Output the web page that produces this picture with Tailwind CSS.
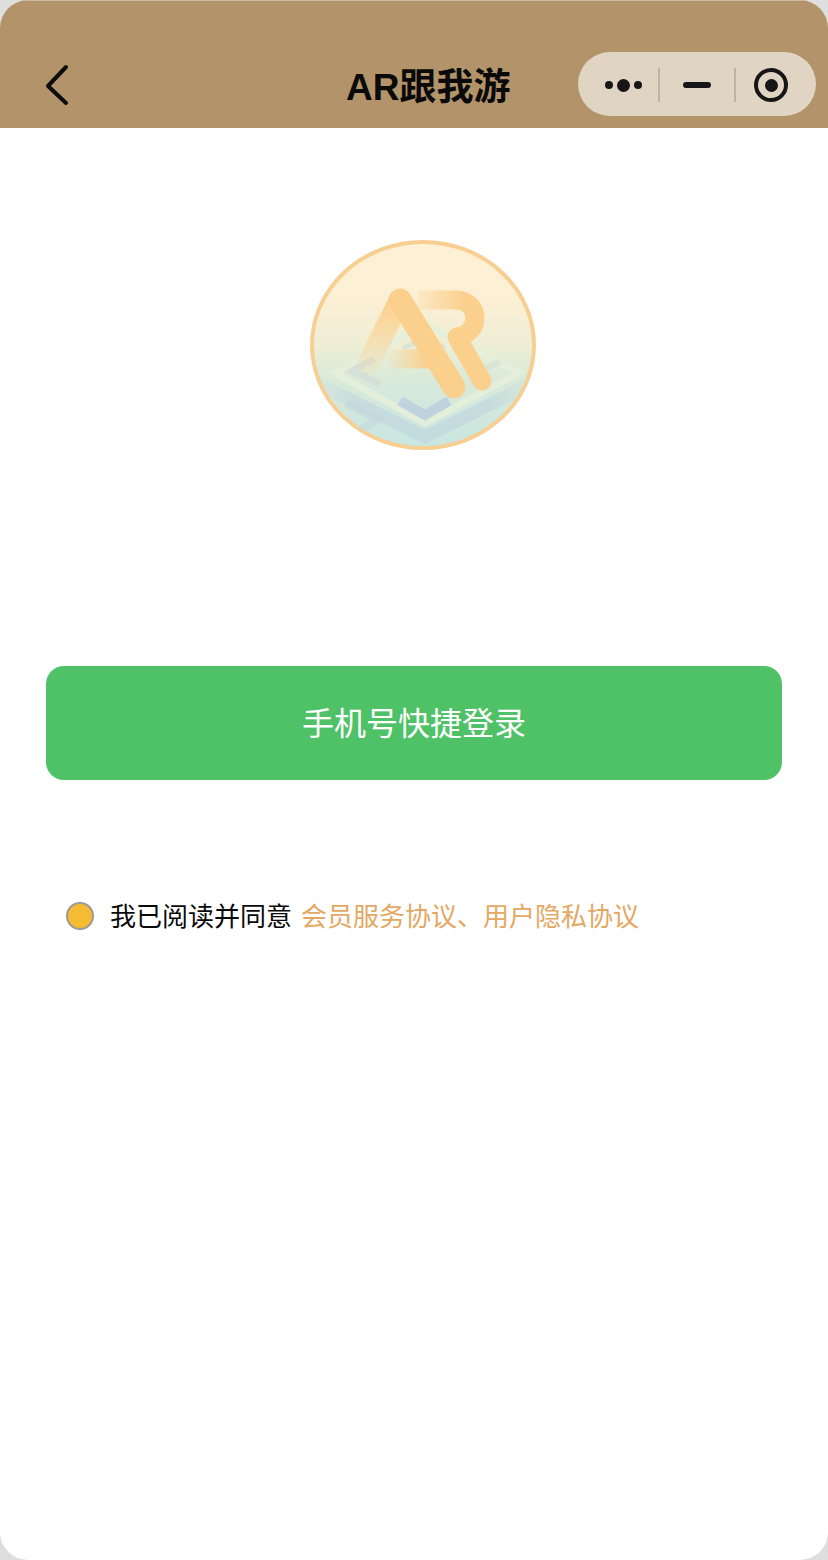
<!DOCTYPE html>
<html lang="zh">
<head>
<meta charset="utf-8">
<script src="https://cdn.jsdelivr.net/npm/@tailwindcss/browser@4"></script>
<title>AR跟我游</title>
</head>
<body class="m-0 bg-[#dedede]">
<div class="w-[828px] h-[1560px] overflow-hidden rounded-[28px] bg-white flex flex-col font-['Liberation_Sans','Noto_Sans_CJK_SC',sans-serif]">
  <header class="h-[128px] shrink-0 bg-[#b39369] flex items-start pt-[51px] border-t border-[#cdbba2]">
    <svg class="ml-[44px] mt-[12px] w-[26px] h-[42px]" viewBox="0 0 26 42" fill="none" stroke="#0c0c0c" stroke-width="4" stroke-linecap="round" stroke-linejoin="round"><path d="M22 3 L4 22 L22 39"/></svg>
    <h1 class="ml-[276px] mt-[16px] w-[164px] text-[37px] leading-[40px] font-bold text-[#0a0a0a] whitespace-nowrap">AR跟我游</h1>
    <div class="ml-[68px] w-[238px] h-[64px] rounded-full bg-[#e0d4c2] flex items-center pt-[2px]">
      <div class="w-[82px] h-[34px] flex items-center justify-center gap-[4px] pl-[10px] border-r-2 border-[#bfb3a2]">
        <span class="w-[8px] h-[8px] rounded-full bg-[#161616]"></span>
        <span class="w-[13px] h-[13px] rounded-full bg-[#161616]"></span>
        <span class="w-[8px] h-[8px] rounded-full bg-[#161616]"></span>
      </div>
      <div class="w-[76px] h-[34px] flex items-center justify-center border-r-2 border-[#bfb3a2]">
        <span class="w-[28px] h-[6px] rounded-full bg-[#161616]"></span>
      </div>
      <div class="flex-1 flex items-center justify-center pr-[10px]">
        <span class="w-[34px] h-[34px] rounded-full border-[4px] border-[#161616] flex items-center justify-center">
          <span class="w-[13px] h-[13px] rounded-full bg-[#161616]"></span>
        </span>
      </div>
    </div>
  </header>

  <main class="flex flex-col flex-1">
    <div class="mt-[112px] ml-[310px] w-[226px] h-[210px]">
      <svg class="w-full h-full" viewBox="0 0 226 210" fill="none">
        <defs>
          <linearGradient id="bg" x1="0" y1="0" x2="0" y2="1">
            <stop offset="0" stop-color="#fdf0d4"/>
            <stop offset="0.3" stop-color="#fbefd5"/>
            <stop offset="0.5" stop-color="#eeeed5"/>
            <stop offset="0.66" stop-color="#d9ead9"/>
            <stop offset="1" stop-color="#c8e6e2"/>
          </linearGradient>
          <clipPath id="c"><ellipse cx="113" cy="105" rx="110" ry="102"/></clipPath>
          <linearGradient id="rt" gradientUnits="userSpaceOnUse" x1="105" y1="0" x2="155" y2="0">
            <stop offset="0" stop-color="#fbd08c" stop-opacity="0.15"/>
            <stop offset="1" stop-color="#fbd08c"/>
          </linearGradient>
          <linearGradient id="ab" gradientUnits="userSpaceOnUse" x1="76" y1="0" x2="118" y2="0">
            <stop offset="0" stop-color="#fbd08c" stop-opacity="0"/>
            <stop offset="1" stop-color="#fbd08c"/>
          </linearGradient>
          <linearGradient id="al" gradientUnits="userSpaceOnUse" x1="0" y1="60" x2="0" y2="128">
            <stop offset="0" stop-color="#fbd08c"/>
            <stop offset="1" stop-color="#fbd08c" stop-opacity="0.15"/>
          </linearGradient>
          <linearGradient id="ch" gradientUnits="userSpaceOnUse" x1="5" y1="0" x2="221" y2="0">
            <stop offset="0" stop-color="#bfd4dd" stop-opacity="0"/>
            <stop offset="0.2" stop-color="#bfd4dd" stop-opacity="0.6"/>
            <stop offset="0.8" stop-color="#bfd4dd" stop-opacity="0.6"/>
            <stop offset="1" stop-color="#bfd4dd" stop-opacity="0"/>
          </linearGradient>
        </defs>
        <ellipse cx="113" cy="105" rx="111" ry="103" fill="url(#bg)" stroke="#f7cf92" stroke-width="4"/>
        <g clip-path="url(#c)" fill="none">
          <path d="M25 133 L115 84 L208 133 L115 183 Z" stroke="#e4eeda" stroke-width="7" opacity="0.9"/>
          <path d="M5 142 L115 197 L221 144" stroke="url(#ch)" stroke-width="13"/>
          <path d="M90 161 L115 175 L139 161" stroke="#bccfdf" stroke-width="10" opacity="0.85"/>
          <path d="M64 119 L42 131 L70 144" stroke="#d3dcd8" stroke-width="7" opacity="0.75"/>
          <path d="M93 108 L115 98 L135 108" stroke="#d4dfd8" stroke-width="5" opacity="0.7"/>
          <path d="M160 135 L190 122" stroke="#d4e0d6" stroke-width="6" opacity="0.6"/>
          <path d="M36 163 L62 177 M48 191 L72 177" stroke="#c3d6dc" stroke-width="8" opacity="0.55"/>
        </g>
        <path d="M90 60 L58 124" stroke="url(#al)" stroke-width="22" stroke-linecap="round"/>
        <path d="M78 119 L128 119" stroke="url(#ab)" stroke-width="19"/>
        <path d="M90 60 L144 147" stroke="#fbd08c" stroke-width="23" stroke-linecap="round"/>
        <path d="M108 60 L146 60 C158 60 165 69 165 78 C165 89 156 96 147 97" stroke="url(#rt)" stroke-width="19"/>
        <path d="M147 97 L172 141" stroke="#fbd08c" stroke-width="19" stroke-linecap="round"/>
      </svg>
    </div>

    <button class="mt-[216px] ml-[46px] w-[736px] h-[114px] rounded-[18px] bg-[#4fc268] text-white text-[32px] leading-[40px] flex items-center justify-center pt-[2px]">手机号快捷登录</button>

    <div class="mt-[122px] ml-[66px] flex items-center h-[28px]">
      <span class="w-[28px] h-[28px] rounded-full bg-[#f5bc33] border-2 border-[#9a9a92]"></span>
      <span class="ml-[16px] mt-[2px] text-[26px] leading-[36px] text-[#0a0a0a] whitespace-nowrap">我已阅读并同意</span>
      <span class="ml-[9px] mt-[2px] text-[26px] leading-[36px] text-[#e3a862] whitespace-nowrap">会员服务协议、用户隐私协议</span>
    </div>
  </main>
</div>
</body>
</html>
